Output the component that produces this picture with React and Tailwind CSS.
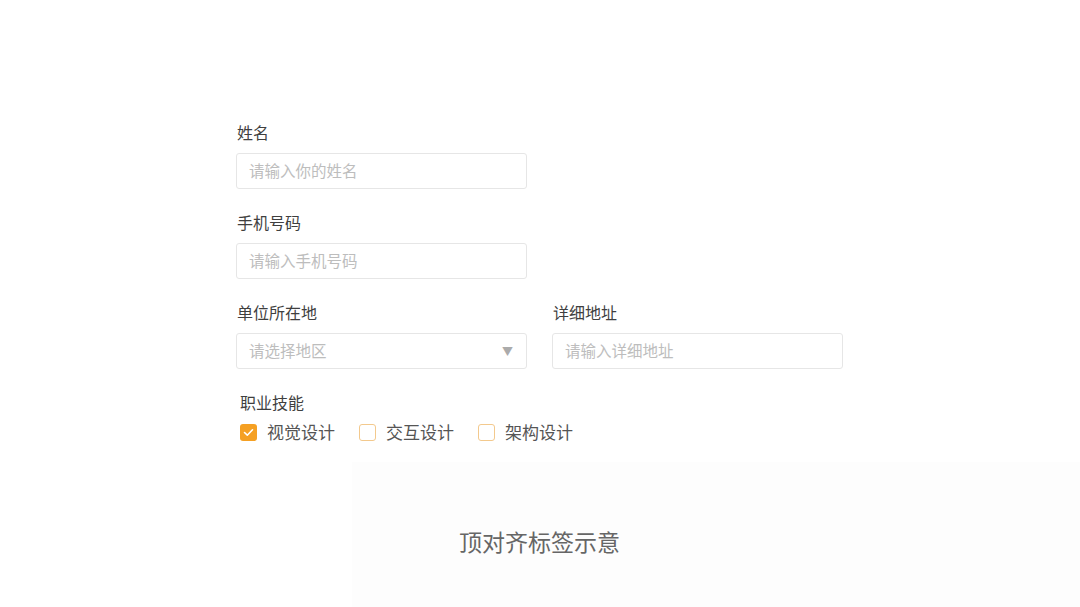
import React from "react";

const font = { fontFamily: '"Noto Sans CJK SC", "Noto Sans", sans-serif' };

function Label({ children, className = "" }) {
  return (
    <div className={"text-[16px] leading-[24px] font-normal text-[#3f3f3f] " + className}>
      {children}
    </div>
  );
}

function Input({ placeholder, className = "" }) {
  return (
    <div
      className={
        "h-[36px] w-[291px] border border-[#e6e6e6] rounded-[3px] flex items-center px-[12px] text-[15.5px] text-[#bdbdbd] " +
        className
      }
    >
      {placeholder}
    </div>
  );
}

function Checkbox({ checked, label }) {
  return (
    <div className="flex items-center gap-[10px]">
      {checked ? (
        <div className="w-[17px] h-[17px] rounded-[3px] bg-[#f5a023] flex items-center justify-center">
          <svg width="11" height="9" viewBox="0 0 11 9" fill="none">
            <path d="M1.5 4.5 L4.3 7.2 L9.5 1.8" stroke="white" strokeWidth="1.6" strokeLinecap="round" strokeLinejoin="round" />
          </svg>
        </div>
      ) : (
        <div className="w-[17px] h-[17px] rounded-[3px] border border-[#f3c98d] bg-white" />
      )}
      <span className="text-[17px] leading-[24px] text-[#555]">{label}</span>
    </div>
  );
}

export default function App() {
  return (
    <div className="w-[1080px] h-[607px] bg-white overflow-hidden flex flex-col" style={font}>
      <div className="pl-[236px] pt-[120px] flex flex-col">
        <Label className="pl-[1px]">姓名</Label>
        <Input placeholder="请输入你的姓名" className="mt-[9px]" />
        <Label className="pl-[1px] mt-[21px]">手机号码</Label>
        <Input placeholder="请输入手机号码" className="mt-[9px]" />
        <div className="flex gap-[25px] mt-[21px]">
          <div className="flex flex-col">
            <Label className="pl-[1px]">单位所在地</Label>
            <div className="mt-[9px] h-[36px] w-[291px] border border-[#e6e6e6] rounded-[3px] flex items-center justify-between pl-[12px] pr-[13px] text-[15.5px] text-[#bdbdbd]">
              <span>请选择地区</span>
              <span className="text-[11px] text-[#ababab]">▼</span>
            </div>
          </div>
          <div className="flex flex-col">
            <Label className="pl-[1px]">详细地址</Label>
            <Input placeholder="请输入详细地址" className="mt-[9px]" />
          </div>
        </div>
        <Label className="pl-[4px] mt-[21px]">职业技能</Label>
        <div className="flex items-center gap-[24px] pl-[4px] mt-[6px]">
          <Checkbox checked label="视觉设计" />
          <Checkbox label="交互设计" />
          <Checkbox label="架构设计" />
        </div>
      </div>
      <div className="mt-[18px] flex-1 bg-[linear-gradient(to_right,#ffffff_352px,#fdfdfd_352px)] flex justify-center pt-[63px]">
        <div className="text-[23px] leading-[32px] text-[#666] pr-[1px]">顶对齐标签示意</div>
      </div>
    </div>
  );
}
